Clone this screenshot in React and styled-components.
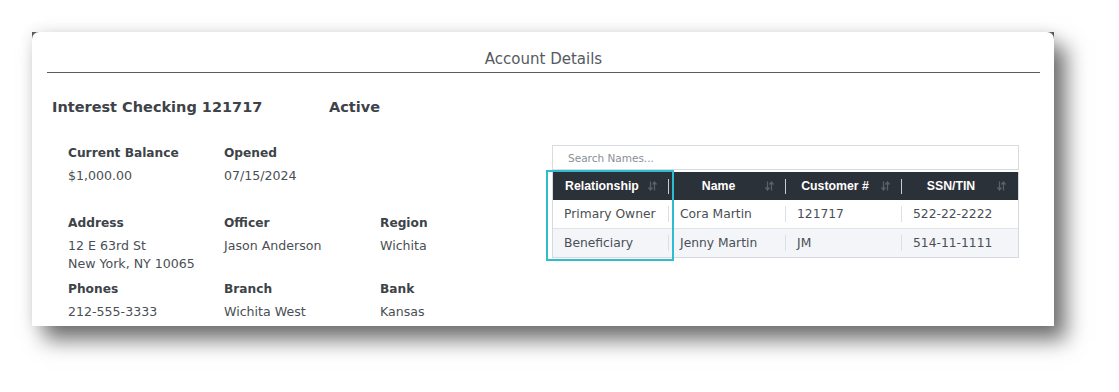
import React from "react";
import styled, { createGlobalStyle } from "styled-components";

const GlobalStyle = createGlobalStyle`
    body {
        margin: 0;
        background: #ffffff;
        font-family: "DejaVu Sans", Verdana, sans-serif;
    }
`;

const Page = styled.div`
    width: 1119px;
    height: 392px;
    padding: 32px 0 0 32px;
    box-sizing: border-box;
    overflow: hidden;
`;

const Frame = styled.div`
    width: 1022px;
    height: 294px;
    background: #5a5a5a;
    box-shadow: 12px 14px 20px rgba(0, 0, 0, 0.55), 0 0 14px rgba(0, 0, 0, 0.1);
`;

const Card = styled.div`
    height: 100%;
    background: #ffffff;
    border-radius: 7px 7px 0 0;
    padding: 0 14px 0 15px;
    box-sizing: border-box;
    overflow: hidden;
    color: #3d4349;
`;

const Title = styled.div`
    text-align: center;
    font-size: 15px;
    line-height: 18px;
    color: #555a60;
    padding: 18px 0 4px;
    border-bottom: 1px solid #585d63;
`;

const HeadRow = styled.div`
    display: flex;
    padding: 25px 0 0 5px;
    font-size: 14.5px;
    font-weight: bold;
    line-height: 18px;
    color: #3d4349;
    .account {
        width: 277px;
    }
`;

const Body = styled.div`
    display: flex;
    justify-content: space-between;
    padding-right: 21px;
`;

const Details = styled.div`
    padding: 28px 0 0 21px;
`;

const DetailRow = styled.div`
    display: grid;
    grid-template-columns: repeat(3, 156px);
    margin-bottom: ${(p) => p.$gap}px;
`;

const Field = styled.div`
    line-height: 18px;
    .label {
        font-size: 12.2px;
        font-weight: bold;
        color: #3d4349;
        margin-bottom: 5px;
    }
    .value {
        font-size: 12.6px;
        color: #4a4f55;
    }
`;

const TableArea = styled.div`
    width: 467px;
    padding-top: 29px;
`;

const Search = styled.input`
    display: block;
    width: 100%;
    height: 25px;
    box-sizing: border-box;
    border: 1px solid #d8dbe0;
    padding: 0 15px;
    font-family: inherit;
    font-size: 10.5px;
    color: #444;
    outline: none;
    &::placeholder {
        color: #8a8f96;
    }
`;

const TableWrap = styled.div`
    position: relative;
    margin-top: 2px;
`;

const Table = styled.div`
    border: 1px solid #d5d9e0;
    border-top: none;
`;

const Row = styled.div`
    display: grid;
    grid-template-columns: 116px 117px 116px 1fr;
    height: 28px;
    background: ${(p) => (p.$head ? "#2b3138" : p.$alt ? "#f3f5f9" : "#ffffff")};
    border-top: ${(p) => (p.$head ? "none" : "1px solid #dfe3ea")};
    &:nth-child(2) {
        border-top: none;
    }
`;

const HeadCell = styled.div`
    position: relative;
    display: flex;
    align-items: center;
    justify-content: center;
    padding-right: 18px;
    font-family: "Liberation Sans", Arial, sans-serif;
    font-size: 12.3px;
    font-weight: bold;
    color: #ffffff;
    &::after {
        content: "";
        display: ${(p) => (p.$last ? "none" : "block")};
        position: absolute;
        right: 0;
        top: 7px;
        height: 15px;
        width: 1px;
        background: #c9ccd1;
    }
    svg {
        position: absolute;
        right: 12px;
        top: 9px;
    }
`;

const Cell = styled.div`
    position: relative;
    display: flex;
    align-items: center;
    padding-left: 11px;
    font-size: 12.3px;
    color: #4a4f55;
    &::after {
        content: "";
        display: ${(p) => (p.$last ? "none" : "block")};
        position: absolute;
        right: 0;
        top: 6px;
        height: 16px;
        width: 1px;
        background: #dcdfe4;
    }
`;

const Highlight = styled.div`
    position: absolute;
    left: -6px;
    top: -2px;
    width: 124px;
    height: 87px;
    border: 2px solid #2fbccf;
    pointer-events: none;
`;

const SortIcon = () => (
    <svg width="9" height="10" viewBox="0 0 9 10">
        <path d="M2.5 0.5 V8.5 M0.5 6.5 L2.5 9 L4.5 6.5" stroke="#5b6168" strokeWidth="1.3" fill="none" />
        <path d="M6.5 9.5 V1.5 M4.5 3.5 L6.5 1 L8.5 3.5" stroke="#5b6168" strokeWidth="1.3" fill="none" />
    </svg>
);

const details = [
    {
        gap: 29,
        fields: [
            { label: "Current Balance", value: ["$1,000.00"] },
            { label: "Opened", value: ["07/15/2024"] },
        ],
    },
    {
        gap: 7,
        fields: [
            { label: "Address", value: ["12 E 63rd St", "New York, NY 10065"] },
            { label: "Officer", value: ["Jason Anderson"] },
            { label: "Region", value: ["Wichita"] },
        ],
    },
    {
        gap: 0,
        fields: [
            { label: "Phones", value: ["212-555-3333"] },
            { label: "Branch", value: ["Wichita West"] },
            { label: "Bank", value: ["Kansas"] },
        ],
    },
];

const columns = ["Relationship", "Name", "Customer #", "SSN/TIN"];

const people = [
    ["Primary Owner", "Cora Martin", "121717", "522-22-2222"],
    ["Beneficiary", "Jenny Martin", "JM", "514-11-1111"],
];

const App = () => {
    return (
        <Page>
            <GlobalStyle />
            <Frame>
                <Card>
                    <Title>Account Details</Title>
                    <HeadRow>
                        <div className="account">Interest Checking 121717</div>
                        <div>Active</div>
                    </HeadRow>
                    <Body>
                        <Details>
                            {details.map((row, i) => (
                                <DetailRow key={i} $gap={row.gap}>
                                    {row.fields.map((f) => (
                                        <Field key={f.label}>
                                            <div className="label">{f.label}</div>
                                            {f.value.map((v) => (
                                                <div className="value" key={v}>{v}</div>
                                            ))}
                                        </Field>
                                    ))}
                                </DetailRow>
                            ))}
                        </Details>
                        <TableArea>
                            <Search placeholder="Search Names..." />
                            <TableWrap>
                                <Table>
                                    <Row $head>
                                        {columns.map((c, i) => (
                                            <HeadCell key={c} $last={i === columns.length - 1}>
                                                {c}
                                                <SortIcon />
                                            </HeadCell>
                                        ))}
                                    </Row>
                                    {people.map((p, r) => (
                                        <Row key={p[0]} $alt={r % 2 === 1}>
                                            {p.map((v, i) => (
                                                <Cell key={i} $last={i === p.length - 1}>{v}</Cell>
                                            ))}
                                        </Row>
                                    ))}
                                </Table>
                                <Highlight />
                            </TableWrap>
                        </TableArea>
                    </Body>
                </Card>
            </Frame>
        </Page>
    );
};

export default App;
